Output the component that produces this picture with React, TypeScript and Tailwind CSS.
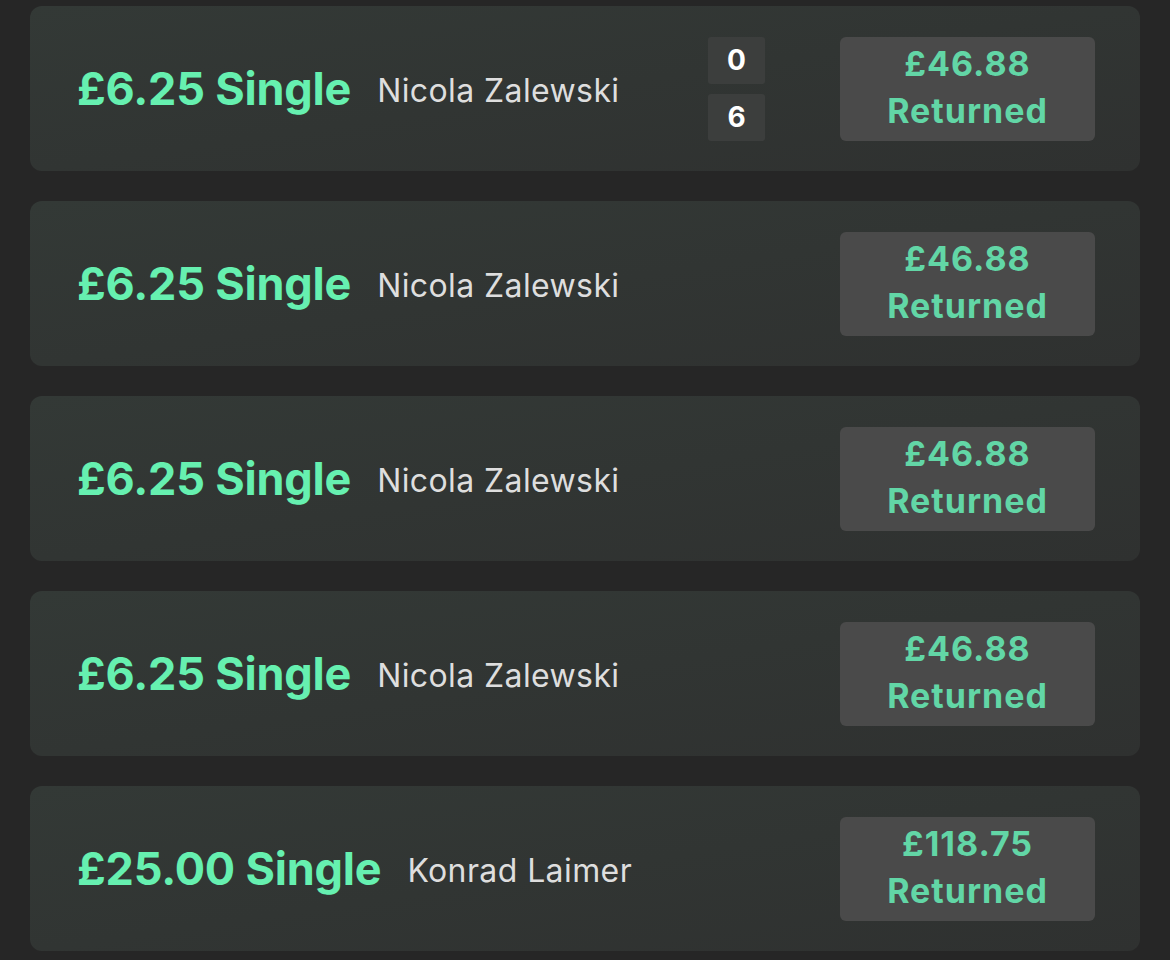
const BETS = [
  { stake: '£6.25', name: 'Nicola Zalewski', returned: '£46.88', score: ['0', '6'] },
  { stake: '£6.25', name: 'Nicola Zalewski', returned: '£46.88' },
  { stake: '£6.25', name: 'Nicola Zalewski', returned: '£46.88' },
  { stake: '£6.25', name: 'Nicola Zalewski', returned: '£46.88' },
  { stake: '£25.00', name: 'Konrad Laimer', returned: '£118.75' },
]

export default function App() {
  return (
    <div
      className="min-h-[960px] bg-[#262626] px-[30px] pt-[6px] flex flex-col gap-[30px]"
      style={{ fontFamily: 'Inter, "Noto Sans", sans-serif' }}
    >
      {BETS.map((b, i) => (
        <div
          key={i}
          className="h-[165px] rounded-[12px] bg-gradient-to-br from-[#333936] to-[#2f3130] flex items-center pl-[47px] pr-[45px]"
        >
          <span className="text-[45px] font-bold text-[#66f0b0] tracking-[-0.2px]">
            {b.stake} Single
          </span>
          <span className="ml-[26px] mt-[4px] text-[32px] text-[#dedede] tracking-[0.4px]">
            {b.name}
          </span>
          <div className="flex-1" />
          {b.score && (
            <div className="flex flex-col gap-[10px] mr-[75px]">
              {b.score.map((s, j) => (
                <div
                  key={j}
                  className="w-[57px] h-[47px] rounded-[3px] bg-[#3c3e3d] flex items-center justify-center text-[28px] font-bold text-white"
                >
                  {s}
                </div>
              ))}
            </div>
          )}
          <div className="w-[255px] h-[104px] rounded-[6px] bg-[#4a4a4a] flex flex-col items-center justify-center pb-[4px] text-[#62d6a6] font-bold text-[34px] leading-[47px] tracking-[1px]">
            <span>{b.returned}</span>
            <span>Returned</span>
          </div>
        </div>
      ))}
    </div>
  )
}
